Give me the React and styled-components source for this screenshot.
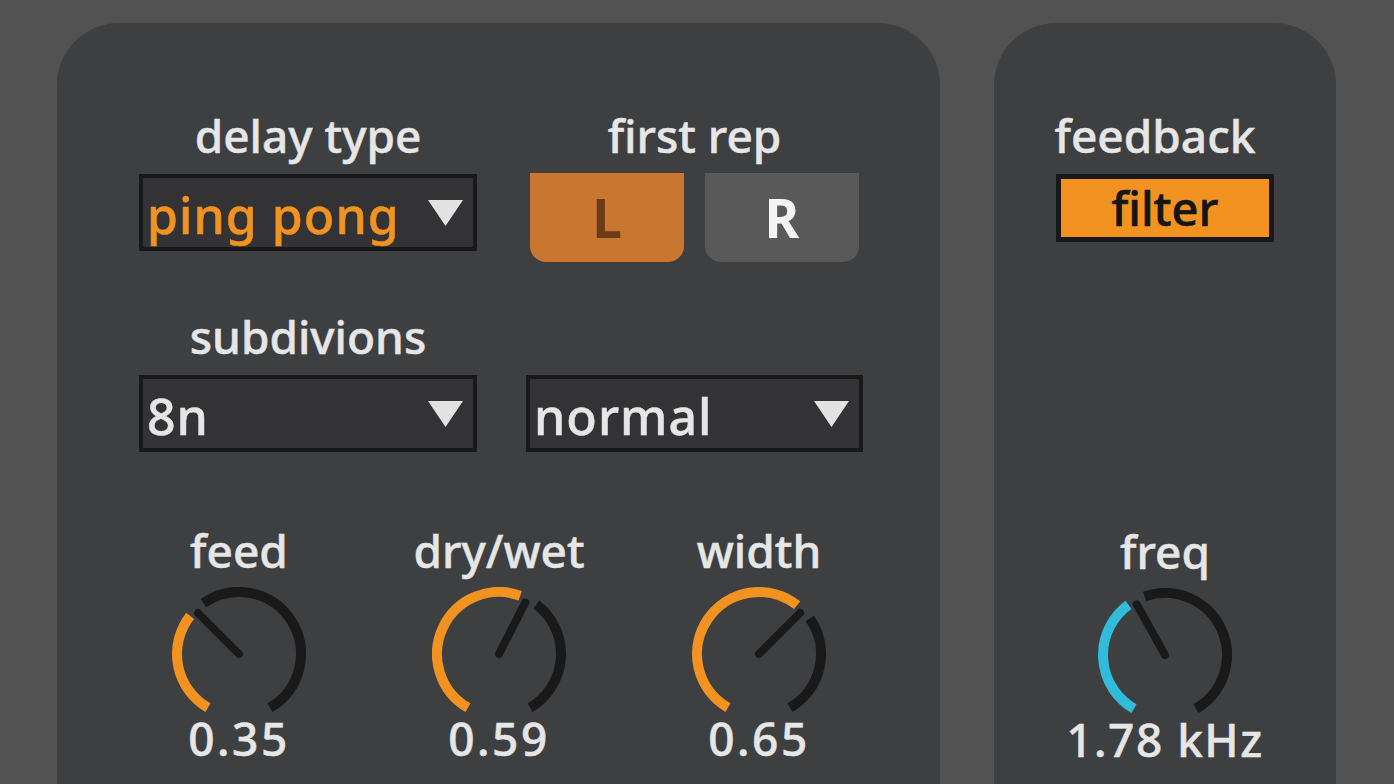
import React from "react";
import styled, { createGlobalStyle } from "styled-components";

const GlobalStyle = createGlobalStyle`
  html, body {
    margin: 0;
    padding: 0;
    background: #525252;
    overflow: hidden;
  }
  * { box-sizing: border-box; }
`;

const Page = styled.div`
  display: flex;
  gap: 54px;
  height: 784px;
  padding: 23px 0 0 57px;
  overflow: hidden;
  font-family: "Noto Sans", "DejaVu Sans", sans-serif;
  color: #e6e6e6;
`;

const Panel = styled.div`
  flex: none;
  width: ${({ $width }) => $width}px;
  height: 820px;
  background: #3e3f41;
  border-radius: 62px 62px 0 0;
  padding-top: 89px;
  padding-left: ${({ $padLeft }) => $padLeft || 0}px;
  display: flex;
  flex-direction: column;
  align-items: ${({ $center }) => ($center ? "center" : "stretch")};
`;

const Row = styled.div`
  display: flex;
  gap: 49px;
  margin-top: ${({ $top }) => $top || 0}px;
`;

const Field = styled.div`
  width: ${({ $width }) => $width}px;
  display: flex;
  flex-direction: column;
  align-items: center;
  justify-content: ${({ $end }) => ($end ? "flex-end" : "flex-start")};
`;

const Label = styled.div`
  font-size: 46px;
  line-height: 46px;
  height: 46px;
  font-weight: 500;
  -webkit-text-stroke: 0.5px currentColor;
  color: #e6e6e6;
  white-space: nowrap;
  margin-bottom: ${({ $gap }) => ($gap === undefined ? 16 : $gap)}px;
  margin-right: ${({ $shift }) => $shift || 0}px;
`;

const Menu = styled.div`
  width: 100%;
  height: 77px;
  border: 4px solid #19191a;
  background: #333335;
  display: flex;
  align-items: center;
  justify-content: space-between;
  padding: 5px 10px 0 4px;
`;

const MenuText = styled.span`
  font-size: 50px;
  line-height: 50px;
  font-weight: 500;
  letter-spacing: 1px;
  -webkit-text-stroke: 0.5px currentColor;
  color: ${({ $active }) => ($active ? "#f29321" : "#e6e6e6")};
  white-space: nowrap;
`;

const Caret = styled.svg`
  flex: none;
  margin-top: -5px;
`;

const Pair = styled.div`
  display: flex;
  gap: 21px;
  margin-top: -1px;
`;

const Toggle = styled.div`
  width: 154px;
  height: 89px;
  border-radius: 0 0 16px 16px;
  background: ${({ $on }) => ($on ? "#c87630" : "#595959")};
  color: ${({ $on }) => ($on ? "#6b3a16" : "#f4f4f4")};
  display: flex;
  align-items: center;
  justify-content: center;
  font-size: 53px;
  line-height: 53px;
  font-weight: 700;
`;

const KnobRow = styled.div`
  display: flex;
  gap: 60px;
  margin-top: ${({ $top }) => $top}px;
`;

const KnobCell = styled.div`
  width: 200px;
  display: flex;
  flex-direction: column;
  align-items: center;
`;

const Dial = styled.svg`
  display: block;
  margin-top: -2px;
`;

const Value = styled.div`
  font-size: 46px;
  line-height: 46px;
  font-weight: 500;
  letter-spacing: ${({ $spacing }) => $spacing}px;
  -webkit-text-stroke: 0.5px currentColor;
  color: #e6e6e6;
  margin-top: 2px;
  white-space: nowrap;
`;

const FilterButton = styled.div`
  width: 218px;
  height: 68px;
  border: 5px solid #19191a;
  background: #f29321;
  color: #151515;
  display: flex;
  align-items: center;
  justify-content: center;
  font-size: 47px;
  line-height: 47px;
  font-weight: 500;
  -webkit-text-stroke: 0.6px currentColor;
`;

const C = 67;
const R = 62;

function polar(r, deg) {
  const a = ((deg - 90) * Math.PI) / 180;
  return [C + r * Math.cos(a), C + r * Math.sin(a)];
}

function arc(a0, a1) {
  if (a1 <= a0) return null;
  const [x0, y0] = polar(R, a0);
  const [x1, y1] = polar(R, a1);
  const large = a1 - a0 > 180 ? 1 : 0;
  return `M ${x0} ${y0} A ${R} ${R} 0 ${large} 1 ${x1} ${y1}`;
}

const Knob = ({ label, value, text, color = "#f29321", spacing = 2.5 }) => {
  const needle = -150 + 300 * value;
  const on = arc(-150, needle - 7);
  const off = arc(needle + 10, 150);
  const [nx, ny] = polar(58, needle);
  return (
    <KnobCell>
      <Label $gap={16}>{label}</Label>
      <Dial width="134" height="126" viewBox="0 0 134 126">
        {on && <path d={on} fill="none" stroke={color} strokeWidth="10" />}
        {off && <path d={off} fill="none" stroke="#19191a" strokeWidth="10" />}
        <line x1={C} y1={C} x2={nx} y2={ny} stroke="#19191a" strokeWidth="8" strokeLinecap="round" />
      </Dial>
      <Value $spacing={spacing}>{text}</Value>
    </KnobCell>
  );
};

const Dropdown = ({ children, active }) => (
  <Menu>
    <MenuText $active={active}>{children}</MenuText>
    <Caret width="35" height="26" viewBox="0 0 35 26">
      <polygon points="0,0 35,0 17.5,26" fill="#e2e2e2" />
    </Caret>
  </Menu>
);

export default function App() {
  return (
    <>
      <GlobalStyle />
      <Page>
        <Panel $width={883} $padLeft={82}>
          <Row>
            <Field $width={338}>
              <Label>delay type</Label>
              <Dropdown active>ping pong</Dropdown>
            </Field>
            <Field $width={337}>
              <Label>first rep</Label>
              <Pair>
                <Toggle $on>L</Toggle>
                <Toggle>R</Toggle>
              </Pair>
            </Field>
          </Row>
          <Row $top={51}>
            <Field $width={338}>
              <Label>subdivions</Label>
              <Dropdown>8n</Dropdown>
            </Field>
            <Field $width={337} $end>
              <Dropdown>normal</Dropdown>
            </Field>
          </Row>
          <KnobRow $top={75}>
            <Knob label="feed" value={0.35} text="0.35" />
            <Knob label="dry/wet" value={0.59} text="0.59" />
            <Knob label="width" value={0.65} text="0.65" />
          </KnobRow>
        </Panel>
        <Panel $width={342} $center>
          <Label $shift={20}>feedback</Label>
          <FilterButton>filter</FilterButton>
          <KnobRow $top={286}>
            <Knob label="freq" value={0.403} text="1.78 kHz" color="#31bcdb" spacing={1.5} />
          </KnobRow>
        </Panel>
      </Page>
    </>
  );
}
